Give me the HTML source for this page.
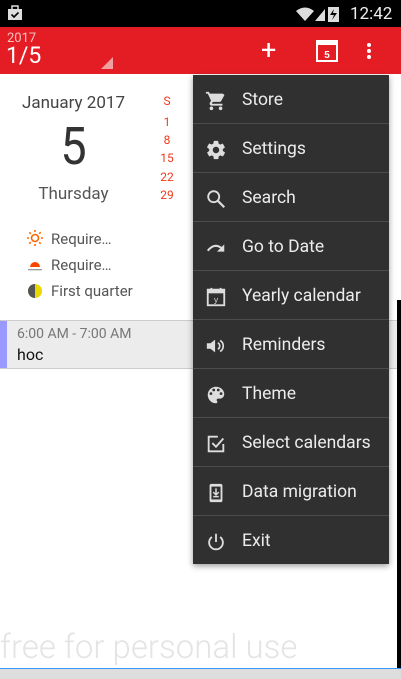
<!DOCTYPE html>
<html><head><meta charset="utf-8"><style>
*{margin:0;padding:0;box-sizing:border-box}
body{width:401px;height:679px;overflow:hidden;background:#fff;font-family:"Roboto","Liberation Sans",sans-serif;position:relative}
.abs{position:absolute}
.menu{position:absolute;left:193px;top:75px;width:196px;height:489px;background:#303030;box-shadow:0 2px 6px rgba(0,0,0,.4)}
.row{height:49px;border-bottom:1px solid #4c4c4c;position:relative;color:#ececec;font-size:17.5px}
.row:last-child{border-bottom:none}
.row span{position:absolute;left:49px;top:15px}
.row svg{position:absolute;left:12px;top:15px}
</style></head><body>
<div class="abs" style="left:0;top:0;width:401px;height:27px;background:#000"></div>
<svg class="abs" style="left:7px;top:5px" width="16" height="16" viewBox="0 0 16 16"><rect x="1" y="4" width="14" height="11" fill="#ddd"/><rect x="5" y="1" width="6" height="4" fill="none" stroke="#ddd" stroke-width="1.5"/><path d="M4.5 9.5l2.5 2.5 4.5-4.5" stroke="#000" stroke-width="1.6" fill="none"/></svg>
<svg class="abs" style="left:295px;top:6px" width="52" height="16" viewBox="0 0 52 16"><path d="M1 5 Q10 -2 19 5 L10 15Z" fill="#ddd"/><path d="M20 15 L30 3 V15Z" fill="#ddd"/><rect x="33" y="1" width="11" height="15" fill="#ddd"/><path d="M39 3 L35 9 H39 L37 14 L42 7 H38 Z" fill="#000"/></svg>
<div class="abs" style="left:350px;top:4px;color:#eee;font-size:17px">12:42</div>
<div class="abs" style="left:0;top:27px;width:401px;height:47px;background:#e41d25"></div>
<div class="abs" style="left:7px;top:31px;color:#f4c0c0;font-size:13px">2017</div>
<div class="abs" style="left:6px;top:42px;color:#fff;font-size:23px">1/5</div>
<div class="abs" style="left:101px;top:57px;width:0;height:0;border-left:12px solid transparent;border-bottom:12px solid #f0a0a0"></div>
<div class="abs" style="left:261px;top:37px;color:#fff;font-size:27px;line-height:27px">+</div>
<svg class="abs" style="left:316px;top:40px" width="22" height="22" viewBox="0 0 22 22"><rect x="1" y="1" width="20" height="20" fill="none" stroke="#fff" stroke-width="2"/><rect x="1" y="1" width="20" height="4" fill="#fff"/><text x="11" y="18" font-size="10" font-weight="bold" fill="#fff" text-anchor="middle" font-family="Liberation Sans">5</text></svg>
<svg class="abs" style="left:366px;top:42px" width="6" height="18"><circle cx="3" cy="3" r="2" fill="#fff"/><circle cx="3" cy="9" r="2" fill="#fff"/><circle cx="3" cy="15" r="2" fill="#fff"/></svg>
<div class="abs" style="left:0;top:93px;width:147px;text-align:center;color:#444;font-size:17px">January 2017</div>
<div class="abs" style="left:0;top:117px;width:147px;text-align:center;color:#333;font-size:52px;line-height:60px;transform:scaleX(.9)">5</div>
<div class="abs" style="left:0;top:184px;width:147px;text-align:center;color:#555;font-size:17px">Thursday</div>
<div class="abs" style="left:155px;top:92px;width:24px;text-align:center;color:#f03a1c;font-size:12px;line-height:18px">S</div>
<div class="abs" style="left:155px;top:113px;width:24px;text-align:center;color:#f03a1c;font-size:12px;line-height:18.2px">1<br>8<br>15<br>22<br>29</div>
<svg class="abs" style="left:27px;top:230px" width="16" height="16" viewBox="0 0 16 16"><circle cx="8" cy="8" r="3.5" fill="none" stroke="#f60" stroke-width="1.6"/><g stroke="#f60" stroke-width="1.6"><path d="M8 0v2M8 14v2M0 8h2M14 8h2M2.3 2.3l1.5 1.5M12.2 12.2l1.5 1.5M2.3 13.7l1.5-1.5M12.2 3.8l1.5-1.5"/></g></svg>
<div class="abs" style="left:51px;top:230px;color:#555;font-size:15px">Require…</div>
<svg class="abs" style="left:27px;top:256px" width="16" height="16" viewBox="0 0 16 16"><path d="M3 11 A5 5 0 0 1 13 11Z" fill="#f40"/><rect x="1" y="13" width="14" height="1.3" fill="#999"/></svg>
<div class="abs" style="left:51px;top:256px;color:#555;font-size:15px">Require…</div>
<svg class="abs" style="left:27px;top:283px" width="16" height="16" viewBox="0 0 16 16"><circle cx="8" cy="8" r="7" fill="#e8d800"/><path d="M8 1 A7 7 0 0 0 8 15Z" fill="#555"/></svg>
<div class="abs" style="left:51px;top:282px;color:#555;font-size:15px">First quarter</div>
<div class="abs" style="left:0;top:320px;width:401px;height:49px;background:#ececec;border-top:1px solid #ccc;border-bottom:1px solid #ccc"></div>
<div class="abs" style="left:0;top:321px;width:7px;height:47px;background:#9999ff"></div>
<div class="abs" style="left:17px;top:326px;color:#777;font-size:14px">6:00 AM - 7:00 AM</div>
<div class="abs" style="left:17px;top:345px;color:#111;font-size:16px">hoc</div>
<div class="abs" style="left:0;top:628px;color:#e4e4e4;font-size:33px;font-weight:300">free for personal use</div>
<div class="abs" style="left:397px;top:300px;width:4px;height:368px;background:#000"></div>
<div class="abs" style="left:0;top:668px;width:401px;height:1px;background:#3399ff"></div>
<div class="abs" style="left:0;top:669px;width:401px;height:10px;background:#ddd"></div>
<div class="menu">
<div class="row"><svg width="22" height="22" viewBox="0 0 24 24"><path fill="#ddd" d="M7 18c-1.1 0-2 .9-2 2s.9 2 2 2 2-.9 2-2-.9-2-2-2zM1 2v2h2l3.6 7.6-1.350 2.4C4.6 15.4 5.7 17 7 17h12v-2H7.4l1.1-2h7.45c.75 0 1.4-.4 1.7-1l3.6-6.5L19.4 4H5.2l-.9-2H1zm16 16c-1.1 0-2 .9-2 2s.9 2 2 2 2-.9 2-2-.9-2-2-2z"/></svg><span>Store</span></div>
<div class="row"><svg width="22" height="22" viewBox="0 0 24 24"><path fill="#ddd" d="M19.4 13c.04-.3.1-.6.1-1s-.03-.7-.1-1l2.1-1.6c.2-.15.24-.4.12-.6l-2-3.5c-.12-.2-.4-.3-.6-.2l-2.500 1c-.5-.4-1.100-.7-1.700-1l-.4-2.600C14.5 2.2 14.3 2 14 2h-4c-.25 0-.46.2-.5.4l-.4 2.6c-.6.25-1.200.6-1.700 1l-2.500-1c-.2-.1-.5 0-.6.2l-2 3.5c-.1.2-.08.5.12.6L4.6 11c-.04.3-.1.7-.1 1s.03.7.1 1l-2.100 1.6c-.2.15-.24.4-.12.6l2 3.5c.12.2.4.3.6.2l2.500-1c.5.4 1.100.7 1.700 1l.4 2.600c.04.2.25.4.5.4h4c.25 0 .46-.2.5-.4l.4-2.600c.6-.25 1.200-.6 1.700-1l2.500 1c.2.1.5 0 .6-.2l2-3.500c.12-.2.07-.5-.12-.6L19.4 13zM12 15.5c-1.900 0-3.500-1.600-3.500-3.500s1.600-3.500 3.500-3.500 3.500 1.600 3.500 3.500-1.600 3.500-3.500 3.500z"/></svg><span>Settings</span></div>
<div class="row"><svg width="22" height="22" viewBox="0 0 24 24"><circle cx="9.5" cy="9.5" r="6" fill="none" stroke="#ddd" stroke-width="2"/><path d="M14 14l7 7" stroke="#ddd" stroke-width="2.4"/></svg><span>Search</span></div>
<div class="row"><svg width="22" height="22" viewBox="0 0 24 24"><path d="M3 15 Q10 6 18 12" fill="none" stroke="#ddd" stroke-width="2.2"/><path d="M21 8v8h-8z" fill="#ddd"/></svg><span>Go to Date</span></div>
<div class="row"><svg width="22" height="22" viewBox="0 0 24 24"><rect x="3" y="4" width="18" height="17" fill="none" stroke="#ddd" stroke-width="2"/><rect x="3" y="4" width="18" height="4" fill="#ddd"/><path d="M7 2v4M17 2v4" stroke="#ddd" stroke-width="2"/><text x="12" y="18" font-size="9" fill="#ddd" text-anchor="middle" font-family="Liberation Sans">y</text></svg><span>Yearly calendar</span></div>
<div class="row"><svg width="22" height="22" viewBox="0 0 24 24"><path d="M2 9h4l5-4v14l-5-4H2z" fill="#ddd"/><path d="M14 8.5a4 4 0 0 1 0 7M16.5 6a7 7 0 0 1 0 12" fill="none" stroke="#ddd" stroke-width="1.8"/></svg><span>Reminders</span></div>
<div class="row"><svg width="22" height="22" viewBox="0 0 24 24"><path fill="#ddd" d="M12 3a9 9 0 0 0 0 18c.8 0 1.5-.7 1.5-1.5 0-.4-.15-.7-.4-1-.2-.3-.4-.6-.4-1 0-.8.7-1.5 1.5-1.5H16c2.8 0 5-2.2 5-5C21 6.6 17 3 12 3zm-5.5 9a1.5 1.5 0 1 1 0-3 1.5 1.5 0 0 1 0 3zm3-4a1.5 1.5 0 1 1 0-3 1.5 1.5 0 0 1 0 3zm5 0a1.5 1.5 0 1 1 0-3 1.5 1.5 0 0 1 0 3zm3 4a1.5 1.5 0 1 1 0-3 1.5 1.5 0 0 1 0 3z"/></svg><span>Theme</span></div>
<div class="row"><svg width="22" height="22" viewBox="0 0 24 24"><path d="M20 12v8H4V4h10" fill="none" stroke="#ddd" stroke-width="2"/><path d="M8 11l4 4 8-9" fill="none" stroke="#ddd" stroke-width="2"/></svg><span>Select calendars</span></div>
<div class="row"><svg width="22" height="22" viewBox="0 0 24 24"><rect x="5" y="2" width="14" height="20" rx="2" fill="#ddd"/><rect x="7" y="5" width="10" height="14" fill="#303030"/><path d="M12 7v7M9 11l3 3 3-3M9 16h6" stroke="#ddd" stroke-width="1.6" fill="none"/></svg><span>Data migration</span></div>
<div class="row"><svg width="22" height="22" viewBox="0 0 24 24"><path d="M12 3v9" stroke="#ddd" stroke-width="2"/><path d="M7.5 6.5a7.5 7.5 0 1 0 9 0" fill="none" stroke="#ddd" stroke-width="2"/></svg><span>Exit</span></div>
</div>
</body></html>
